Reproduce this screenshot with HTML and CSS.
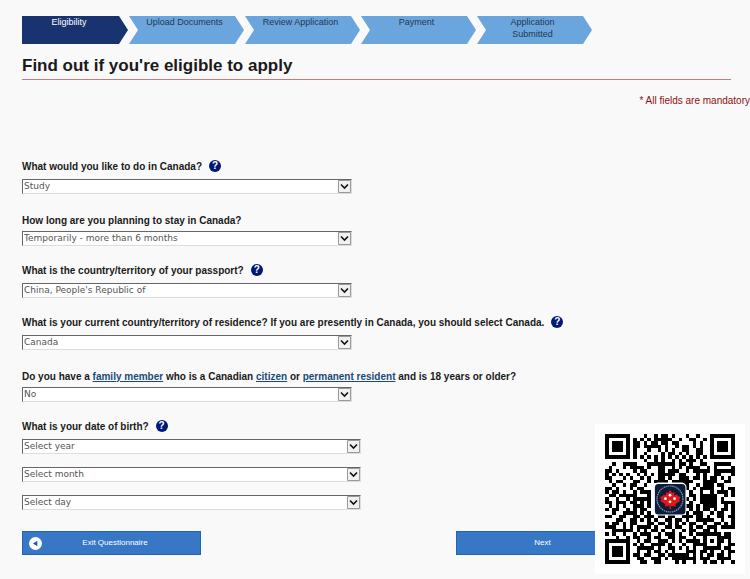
FILE: index.html
```html
<!DOCTYPE html>
<html lang="en">
<head>
  <meta charset="UTF-8" />
  <meta name="viewport" content="width=device-width, initial-scale=1" />
  <title>Find out if you're eligible to apply</title>
  <link rel="stylesheet" href="styles.css">
</head>
<body>

  <ol class="steps">
    <li class="step active">Eligibility</li>
    <li class="step">Upload Documents</li>
    <li class="step">Review Application</li>
    <li class="step">Payment</li>
    <li class="step">Application<br>Submitted</li>
  </ol>

  <h1>Find out if you're eligible to apply</h1>
  <p class="mandatory">* All fields are mandatory</p>

  <form>
    <div class="field">
      <div class="question with-help">
        <label for="purpose">What would you like to do in Canada?</label>
        <button type="button" class="help">?</button>
      </div>
      <select id="purpose"><option>Study</option></select>
    </div>

    <div class="field">
      <div class="question">
        <label for="duration">How long are you planning to stay in Canada?</label>
      </div>
      <select id="duration"><option>Temporarily - more than 6 months</option></select>
    </div>

    <div class="field">
      <div class="question with-help">
        <label for="passport">What is the country/territory of your passport?</label>
        <button type="button" class="help">?</button>
      </div>
      <select id="passport"><option>China, People's Republic of</option></select>
    </div>

    <div class="field">
      <div class="question with-help">
        <label for="residence">What is your current country/territory of residence? If you are presently in Canada, you should select Canada.</label>
        <button type="button" class="help">?</button>
      </div>
      <select id="residence"><option>Canada</option></select>
    </div>

    <div class="field">
      <div class="question">
        <label for="family">Do you have a <a href="#">family member</a> who is a Canadian <a href="#">citizen</a> or <a href="#">permanent resident</a> and is 18 years or older?</label>
      </div>
      <select id="family"><option>No</option></select>
    </div>

    <div class="field birth">
      <div class="question with-help">
        <label for="year">What is your date of birth?</label>
        <button type="button" class="help">?</button>
      </div>
      <select id="year"><option>Select year</option></select>
      <select id="month" aria-label="Month"><option>Select month</option></select>
      <select id="day" aria-label="Day"><option>Select day</option></select>
    </div>

    <div class="actions">
      <button type="button" class="btn exit">
        <svg width="13" height="13" viewBox="0 0 13 13"><circle cx="6.5" cy="6.5" r="6.5" fill="#fff"/><path d="M8.3 3.8v5.4L4 6.5z" fill="#1c5aa8"/></svg>
        <span>Exit Questionnaire</span>
      </button>
      <button type="button" class="btn next"><span>Next</span></button>
    </div>
  </form>

  <div class="qr">
    <svg viewBox="0 0 37 37" role="img" aria-label="QR code">
      <path id="qrModules" shape-rendering="crispEdges" />
      <rect x="13.8" y="13.8" width="9.4" height="9.4" rx="1.4" fill="#fff" />
      <rect x="14.2" y="14.2" width="8.7" height="8.7" rx="1" fill="#0b1c38" />
      <circle cx="18.5" cy="18.5" r="3.7" fill="none" stroke="#8d99ac" stroke-width=".35" stroke-dasharray=".4 .2" />
      <path d="M18.5 15.9l.6.9.7-.3-.1 1 .8-.3.3.5.8.2-.5.8.3.4-1.4.9.1.6-1.3-.1v.9h-.4v-.9l-1.4.1.2-.6-1.5-.9.4-.4-.5-.8.8-.2.3-.5.7.3-.1-1 .7.3z" fill="#e01818" />
      <path d="M18.3 20.3h.3v.9h-.3z" fill="#a01018" />
      <g fill="#fff">
        <circle cx="18.5" cy="17.4" r=".4" />
        <circle cx="17.2" cy="18.4" r=".4" />
        <circle cx="19.8" cy="18.4" r=".4" />
        <circle cx="18.5" cy="19.3" r=".4" />
      </g>
    </svg>
  </div>

  <script src="qr.js"></script>
</body>
</html>
```
FILE: styles.css
```css
body {
  margin: 0;
  padding: 16px 0 24px 22px;
  background-color: #f9f9f9;
  color: #1a1a1a;
  font-family: "Liberation Sans", Arial, sans-serif;
  font-size: 10px;
}
.steps {
  display: flex;
  gap: 1px;
  max-width: 570px;
  margin: 0;
  padding: 0;
  list-style: none;
}
.step {
  flex: 0 1 115px;
  box-sizing: border-box;
  height: 28px;
  padding-right: 4px;
  background-color: #6aa5de;
  color: #26384c;
  font-size: 9px;
  line-height: 12px;
  text-align: center;
  clip-path: polygon(0 0, calc(100% - 9px) 0, 100% 50%, calc(100% - 9px) 100%, 0 100%, 9px 50%);
}
.step.active {
  flex-basis: 106px;
  padding-right: 12px;
  background-color: #18336f;
  color: white;
  clip-path: polygon(0 0, calc(100% - 9px) 0, 100% 50%, calc(100% - 9px) 100%, 0 100%);
}
h1 {
  margin: 10px 19px 0 0;
  padding-bottom: 1px;
  border-bottom: 1px solid #c27b7e;
  font-size: 17px;
  line-height: 24px;
}
.mandatory {
  margin: 13px 0 49px;
  color: #8f1010;
  line-height: 16px;
  text-align: right;
}
.field {
  margin-bottom: 16px;
}
.question {
  display: flex;
  align-items: center;
  gap: 7px;
  height: 20px;
  margin-bottom: 1px;
  font-weight: bold;
}
.question.with-help {
  height: 16px;
  margin-bottom: 5px;
}
.question a {
  color: #1b4a75;
}
.help {
  width: 12px;
  height: 12px;
  padding: 0;
  border: none;
  border-radius: 50%;
  background-color: #00187a;
  color: white;
  font: bold 10px/12px "Liberation Sans", Arial, sans-serif;
}
select {
  display: block;
  box-sizing: border-box;
  width: 330px;
  max-width: 100%;
  height: 15px;
  padding: 0 16px 0 1px;
  appearance: none;
  border: 1px solid;
  border-color: #666 #ddd #ddd #666;
  border-radius: 0;
  background: white url("data:image/svg+xml,%3Csvg xmlns='http://www.w3.org/2000/svg' width='13' height='13'%3E%3Cpath d='M.5.5h12v12H.5z' fill='%23f1f1f1' stroke='%23999'/%3E%3Cpath d='M3 4.5l3.5 3.5 3.5-3.5' fill='none' stroke='%23111' stroke-width='1.6'/%3E%3C/svg%3E") no-repeat right top;
  color: #555;
  font: 9px/13px "DejaVu Sans", Verdana, sans-serif;
}
.birth {
  margin-bottom: 21px;
}
.birth select {
  width: 339px;
}
.birth select + select {
  margin-top: 13px;
}
.actions {
  display: flex;
  justify-content: space-between;
  max-width: 613px;
}
.btn {
  display: flex;
  align-items: center;
  box-sizing: border-box;
  width: 179px;
  height: 24px;
  padding: 0 12px 0 6px;
  border: 1px solid #1f66b8;
  background-color: #3877c5;
  color: white;
  font: 8px/12px "Liberation Sans", Arial, sans-serif;
}
.btn span {
  flex: 1;
  text-align: center;
}
/* sits over the page corner */
.qr {
  position: fixed;
  right: 5px;
  bottom: 5px;
  box-sizing: border-box;
  width: 150px;
  padding: 10px;
  background-color: white;
}
.qr svg {
  display: block;
}
```
FILE: qr.js
```js
const rows = [
  "#######....#..#.##.#...#..#...#######",
  "#.....#.#.#.#.#####..#..##..#.#.....#",
  "#.###.#.##.#.##.##.##....#.#..#.###.#",
  "#.###.#.##.#####.#..#.##.#.#..#.###.#",
  "#.###.#.#...#..#.#.#..##..##..#.###.#",
  "#.....#.#..#....#.##.#.#..##..#.....#",
  "#######.#.#.#.#.#.#.#.#.#.#.#.#######",
  "...........#..#.#..#.#.###.#.........",
  "..#..####...########.##.#..##..#####.",
  ".#...#.####.#..##..#.#.####..#.#....#",
  "##.#....#.##...##.###..#.#####.######",
  "#.#.#.#..#.#.#.#####.##...#.#..##...#",
  "##...#.#..#.#..##.#..###.##.#.##.#.#.",
  ".#.##...##..#.####.######...####..##.",
  "..#..#.##..#...#########..#.###.##...",
  "##.#...#.##............#.#.####..#.##",
  "#.##.#..#.###...........#..#..#.###.#",
  ".##.#####...#...........##.#####..#.#",
  "#..#..#.#####..........#.#.#####.#...",
  "##.###.##.#.#...........#..#####.####",
  ".#.#.#..###.#..........##.#.####..#.#",
  "#.##..#.#.##............#.#.##.#.##.#",
  "..#..####.#.#..........#.###..#.##..#",
  "##..##..##.###.##.##..###.##.#..##.##",
  "...##..##.#.#.#..##.##.#..#####..#..#",
  "#.##.#.##...##.##.#.#.#.##..#..##.#.#",
  "###..#.#.####.#..##.##..#.##.###.####",
  "..######.#.#.##.#..#..#.##..##.#.....",
  "#.#..#..#.###..#.###.#..#.#######.##.",
  "...#..#.##..#.##..##.##..#..#...####.",
  "#######..#.##..###.#.#.####.#.#.##.#.",
  "#.....#.#.#..####.#...#..####...#..##",
  "#.###.#..#####.#..##.#.#.#..#####.##.",
  "#.###.#..#..#.##.#.#...###.##.#..#.##",
  "#.###.#.##.##..##.######.#.#.##.##.#.",
  "#.....#..##..###.#.#######.###..####.",
  "#######...##..##....#.#..#..#.##.#..#"
];

// one horizontal bar per run of dark modules
let path = "";
rows.forEach((row, y) => {
  for (const run of row.matchAll(/#+/g)) {
    path += `M${run.index} ${y}h${run[0].length}v1h-${run[0].length}z`;
  }
});
document.getElementById("qrModules").setAttribute("d", path);
```
